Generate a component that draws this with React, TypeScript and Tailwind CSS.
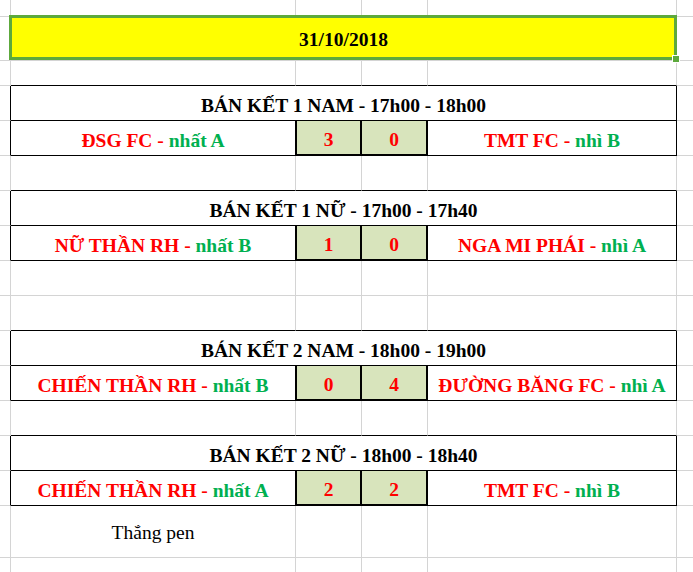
import React from "react";

type Edge = "grid" | "black" | "thick";

const rightCls: Record<Edge, string> = {
  grid: "border-r border-r-[#d4d4d4]",
  black: "border-r border-r-black",
  thick: "border-r-2 border-r-black",
};

const bottomCls: Record<Edge, string> = {
  grid: "border-b border-b-[#d4d4d4]",
  black: "border-b border-b-black",
  thick: "border-b-2 border-b-black",
};

const spanCls: Record<number, string> = {
  1: "",
  4: "col-span-4",
};

function Cell({
  span = 1,
  right = "grid",
  bottom = "grid",
  className = "",
  children,
}: {
  span?: number;
  right?: Edge;
  bottom?: Edge;
  className?: string;
  children?: React.ReactNode;
}) {
  return (
    <div className={`min-w-0 ${spanCls[span]} ${rightCls[right]} ${bottomCls[bottom]} ${className}`}>
      {children}
    </div>
  );
}

// plain row; topOfTable = its bottom line is the table's top edge
function EmptyRow({ topOfTable = false }: { topOfTable?: boolean }) {
  const b: Edge = topOfTable ? "black" : "grid";
  return (
    <>
      <Cell />
      <Cell bottom={b} />
      <Cell bottom={b} />
      <Cell bottom={b} />
      <Cell bottom={b} />
      <Cell />
    </>
  );
}

function Team({ name, rank }: { name: string; rank: string }) {
  return (
    <span className="whitespace-nowrap">
      <span className="text-[#ff0000]">{name} - </span>
      <span className="text-[#00b050]">{rank}</span>
    </span>
  );
}

type Match = {
  title: string;
  home: string;
  homeRank: string;
  away: string;
  awayRank: string;
  score: [number, number];
};

function MatchTable({ m }: { m: Match }) {
  return (
    <>
      {/* Header row */}
      <Cell right="black" />
      <Cell span={4} right="black" bottom="black" className="flex items-center justify-center pt-[5px] font-bold">
        {m.title}
      </Cell>
      <Cell />

      {/* Result row */}
      <Cell right="black" />
      <Cell right="black" bottom="black" className="flex items-center justify-center pt-[5px] font-bold">
        <Team name={m.home} rank={m.homeRank} />
      </Cell>
      <Cell right="thick" bottom="thick" className="flex items-center justify-center border-l border-l-black bg-[#d8e4bc] pt-[5px] font-bold text-[#ff0000]">
        {m.score[0]}
      </Cell>
      <Cell right="thick" bottom="thick" className="flex items-center justify-center bg-[#d8e4bc] pt-[5px] font-bold text-[#ff0000]">
        {m.score[1]}
      </Cell>
      <Cell right="black" bottom="black" className="flex items-center justify-center pt-[5px] font-bold">
        <Team name={m.away} rank={m.awayRank} />
      </Cell>
      <Cell />
    </>
  );
}

const matches: Match[] = [
  { title: "BÁN KẾT 1 NAM - 17h00 - 18h00", home: "ĐSG FC", homeRank: "nhất A", away: "TMT FC", awayRank: "nhì B", score: [3, 0] },
  { title: "BÁN KẾT 1 NỮ - 17h00 - 17h40", home: "NỮ THẦN RH", homeRank: "nhất B", away: "NGA MI PHÁI", awayRank: "nhì A", score: [1, 0] },
  { title: "BÁN KẾT 2 NAM - 18h00 - 19h00", home: "CHIẾN THẦN RH", homeRank: "nhất B", away: "ĐƯỜNG BĂNG FC", awayRank: "nhì A", score: [0, 4] },
  { title: "BÁN KẾT 2 NỮ - 18h00 - 18h40", home: "CHIẾN THẦN RH", homeRank: "nhất A", away: "TMT FC", awayRank: "nhì B", score: [2, 2] },
];

export default function App() {
  return (
    <div className="h-[572px] w-[693px] overflow-hidden bg-white font-['Liberation_Serif',serif] text-[19.5px] text-black">
      <div className="grid w-max grid-cols-[11px_285px_66px_66px_249px_80px] grid-rows-[17px_44px_25px_repeat(12,35px)_52px_30px]">
        <EmptyRow />

        {/* Date cell (selected) */}
        <Cell />
        <Cell span={4} className="relative flex items-center justify-center bg-[#ffff00] pt-[3px] font-bold">
          31/10/2018
          <div className="absolute -top-[2px] -right-px bottom-0 -left-[2px] border-[3px] border-[#5da93c]" />
          <div className="absolute top-[38px] left-[661px] h-[8px] w-[8px] border border-white bg-[#5da93c]" />
        </Cell>
        <Cell />

        <EmptyRow topOfTable />
        <MatchTable m={matches[0]} />
        <EmptyRow topOfTable />
        <MatchTable m={matches[1]} />
        <EmptyRow />
        <EmptyRow topOfTable />
        <MatchTable m={matches[2]} />
        <EmptyRow topOfTable />
        <MatchTable m={matches[3]} />

        {/* Note */}
        <Cell />
        <Cell className="flex items-center justify-center pt-[2px]">Thắng pen</Cell>
        <Cell />
        <Cell />
        <Cell />
        <Cell />

        <EmptyRow />
      </div>
    </div>
  );
}
